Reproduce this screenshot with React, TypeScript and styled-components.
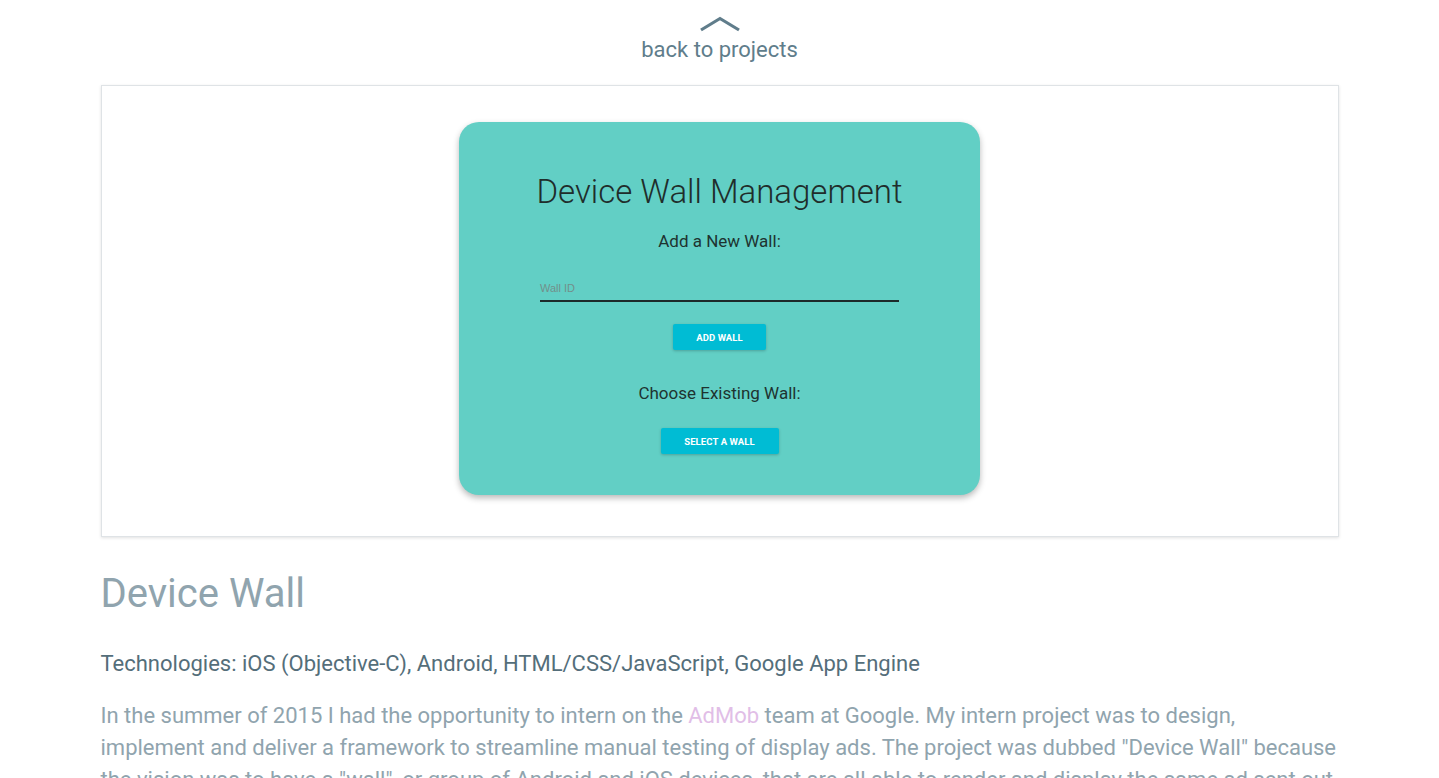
import React from "react";
import styled, { createGlobalStyle } from "styled-components";

const GlobalStyle = createGlobalStyle`
  html, body { margin: 0; padding: 0; background: #ffffff; }
  body { font-family: Roboto, "Noto Sans", Arial, sans-serif; overflow: hidden; }
  * { box-sizing: border-box; }
`;

const Page = styled.div`
  width: 1238px;
  margin: 0 auto;
`;

const BackLink = styled.a`
  display: flex;
  flex-direction: column;
  align-items: center;
  padding-top: 16px;
  color: #607d8b;
  text-decoration: none;
  font-size: 22px;
  line-height: 26px;
  cursor: pointer;
`;

const Chevron = styled.svg`
  display: block;
  width: 42px;
  height: 16px;
  margin-bottom: 5px;
`;

const Frame = styled.div`
  margin-top: 22px;
  height: 452px;
  border: 1px solid #dfe3e6;
  box-shadow: 0 1px 3px rgba(0, 0, 0, 0.12);
  background: #fff;
  display: flex;
  justify-content: center;
  padding-top: 36px;
`;

const Card = styled.div`
  width: 521px;
  height: 373px;
  background: #62cfc5;
  border-radius: 20px;
  box-shadow: 0 3px 6px rgba(0, 0, 0, 0.28);
  display: flex;
  flex-direction: column;
  align-items: center;
  padding-top: 50px;
  color: #1f2d2b;
`;

const CardTitle = styled.div`
  font-size: 33px;
  font-weight: 300;
  line-height: 40px;
`;

const CardLabel = styled.div<{ $top: number }>`
  margin-top: ${(p) => p.$top}px;
  font-size: 17px;
  font-weight: 400;
  line-height: 22px;
  color: #1e3330;
`;

const Field = styled.div`
  margin-top: 29px;
  width: 359px;
  border-bottom: 2px solid #1c2a2a;
  padding-bottom: 5px;
  font-size: 11px;
  line-height: 14px;
  color: #72908b;
  font-family: "Liberation Sans", Arial, sans-serif;
`;

const Button = styled.button<{ $w: number; $top: number }>`
  margin-top: ${(p) => p.$top}px;
  width: ${(p) => p.$w}px;
  height: 26px;
  border: none;
  border-radius: 2px;
  background: #00bcd4;
  color: #ffffff;
  font-family: Roboto, Arial, sans-serif;
  font-weight: 700;
  font-size: 9.5px;
  letter-spacing: 0.1px;
  box-shadow: 0 1px 3px rgba(0, 0, 0, 0.22);
  padding: 0;
`;

const Heading = styled.h1`
  margin: 33px 0 0;
  font-size: 40px;
  font-weight: 400;
  line-height: 48px;
  color: #90a4ae;
`;

const Tech = styled.h3`
  margin: 32px 0 0;
  font-size: 22px;
  font-weight: 400;
  line-height: 28px;
  color: #546e7a;
`;

const Para = styled.p`
  margin: 22px 0 0;
  font-size: 22px;
  line-height: 32px;
  color: #90a4ae;
`;

const Link = styled.a`
  color: #e1bee7;
  text-decoration: none;
`;

export default function App() {
  return (
    <>
      <GlobalStyle />
      <Page>
        <BackLink>
          <Chevron viewBox="0 0 42 16">
            <polyline points="2,14 21,2.5 40,14" fill="none" stroke="#607d8b" strokeWidth="3.2" />
          </Chevron>
          back to projects
        </BackLink>
        <Frame>
          <Card>
            <CardTitle>Device Wall Management</CardTitle>
            <CardLabel $top={18}>Add a New Wall:</CardLabel>
            <Field>Wall ID</Field>
            <Button $w={93} $top={22}>ADD WALL</Button>
            <CardLabel $top={32}>Choose Existing Wall:</CardLabel>
            <Button $w={118} $top={24}>SELECT A WALL</Button>
          </Card>
        </Frame>
        <Heading>Device Wall</Heading>
        <Tech>Technologies: iOS (Objective-C), Android, HTML/CSS/JavaScript, Google App Engine</Tech>
        <Para>
          In the summer of 2015 I had the opportunity to intern on the <Link>AdMob</Link> team at Google. My intern project was to design, implement and deliver a framework to streamline manual testing of display ads. The project was dubbed "Device Wall" because the vision was to have a "wall", or group of Android and iOS devices, that are all able to render and display the same ad sent out from a single web interface.
        </Para>
      </Page>
    </>
  );
}
